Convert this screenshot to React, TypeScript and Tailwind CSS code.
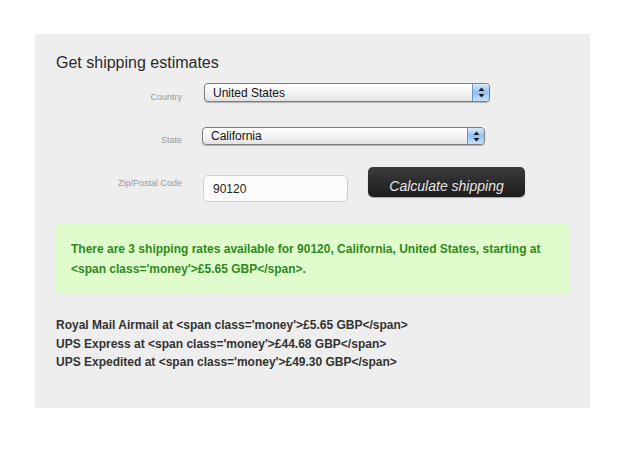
import React from 'react';

const Stepper: React.FC = () => (
  <div className="absolute right-0 top-0 bottom-0 w-[17px] rounded-r-[4px] border-l border-[#6f93c4] bg-gradient-to-b from-[#d9ebfd] via-[#92c1f3] to-[#c6e1fb] flex items-center justify-center">
    <svg width="7" height="11" viewBox="0 0 7 11">
      <path d="M3.5 0.5 L6.5 4 L0.5 4 Z" fill="#1a1a1a" />
      <path d="M3.5 10.5 L6.5 7 L0.5 7 Z" fill="#1a1a1a" />
    </svg>
  </div>
);

const Select: React.FC<{ value: string; className: string }> = ({ value, className }) => (
  <div className={`relative rounded-[4px] border border-[#7d7d7d] bg-gradient-to-b from-[#ffffff] via-[#f4f4f4] to-[#e2e2e2] shadow-[0_1px_1px_rgba(0,0,0,0.25)] ${className}`}>
    <span className="absolute left-[8px] top-0 bottom-0 flex items-center text-[12px] text-[#111]">{value}</span>
    <Stepper />
  </div>
);

export default function App() {
  const rates = [
    ['Royal Mail Airmail', '£5.65 GBP'],
    ['UPS Express', '£44.68 GBP'],
    ['UPS Expedited', '£49.30 GBP'],
  ];

  return (
    <div className="w-[640px] h-[449px] bg-white pt-[34px] pl-[35px] font-['Liberation_Sans',Arial,sans-serif]">
      <div className="w-[555px] h-[374px] bg-[#eeeeee] pt-[19px]">
        <h2 className="pl-[21px] text-[16px] leading-[20px] text-[#2a2a2a]">Get shipping estimates</h2>

        <div className="mt-[10px] flex items-start">
          <label className="w-[147px] pt-[8px] text-right text-[9px] leading-[12px] text-[#999]">Country</label>
          <Select value="United States" className="ml-[22px] w-[286px] h-[19px]" />
        </div>

        <div className="mt-[24px] flex items-start">
          <label className="w-[147px] pt-[7px] text-right text-[9px] leading-[12px] text-[#999]">State</label>
          <Select value="California" className="ml-[20px] w-[283px] h-[18px]" />
        </div>

        <div className="mt-[21px] flex items-start">
          <label className="w-[147px] pt-[10px] text-right text-[9px] leading-[12px] text-[#999]">Zip/Postal Code</label>
          <div className="ml-[21px] mt-[8px] w-[145px] h-[27px] rounded-[5px] border border-[#cfcfcf] bg-[#fbfbfb] pl-[9px] flex items-center text-[12px] text-[#222]">
            90120
          </div>
          <button className="ml-[20px] w-[157px] h-[30px] rounded-[5px] bg-gradient-to-b from-[#3c3c3c] to-[#1c1c1c] pt-[7px] text-[14px] leading-[20px] italic text-[#e6e6e6] shadow-[0_1px_1px_rgba(0,0,0,0.3)]">
            Calculate shipping
          </button>
        </div>

        <div className="mt-[22px] ml-[20px] w-[515px] h-[70px] rounded-[5px] bg-[#e0fccc] pl-[16px] pt-[15px] text-[12px] font-bold leading-[20px] text-[#2f8a1c]">
          There are 3 shipping rates available for 90120, California, United States, starting at
          <br />
          {"<span class='money'>£5.65 GBP</span>."}
        </div>

        <ul className="mt-[22px] pl-[21px] text-[12px] font-bold leading-[18.5px] text-[#333]">
          {rates.map(([name, price]) => (
            <li key={name}>{`${name} at <span class='money'>${price}</span>`}</li>
          ))}
        </ul>
      </div>
    </div>
  );
}
